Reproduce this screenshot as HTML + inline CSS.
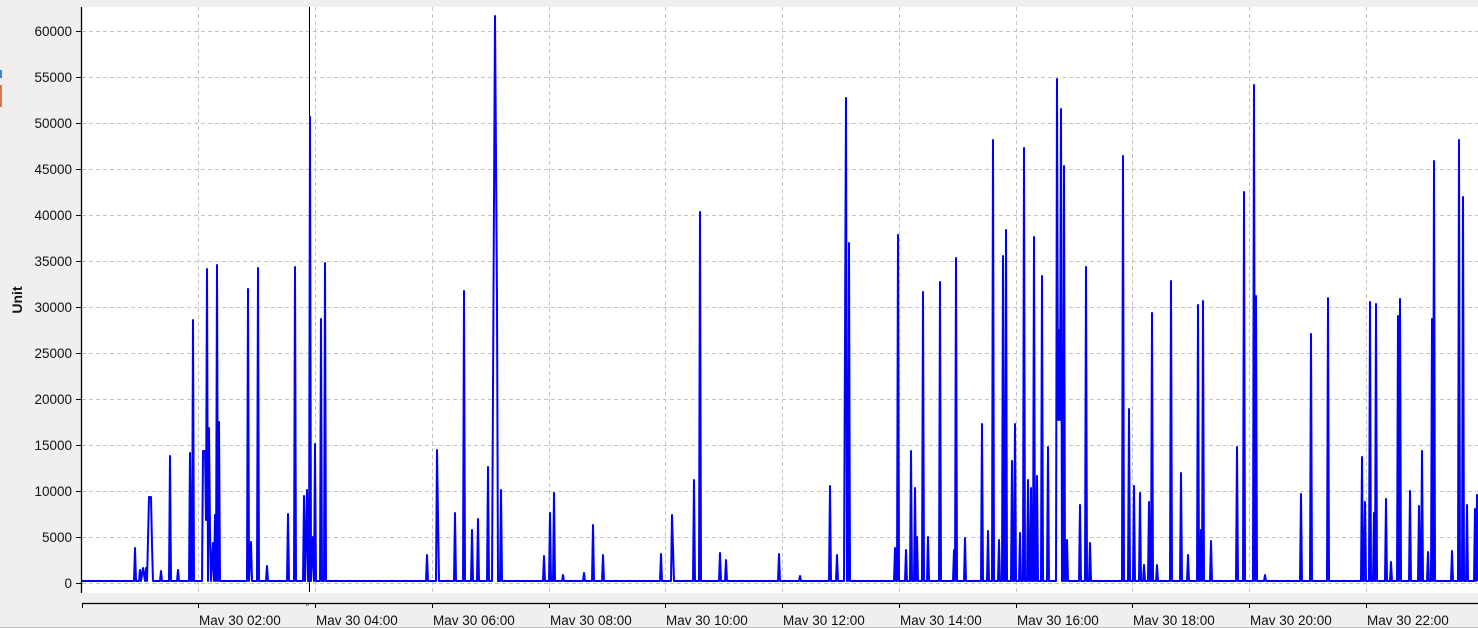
<!DOCTYPE html>
<html><head><style>
html,body{margin:0;padding:0;background:#f0efed;width:1478px;height:628px;overflow:hidden;font-family:"Liberation Sans",sans-serif}
</style></head><body>
<svg width="1478" height="628" xmlns="http://www.w3.org/2000/svg" style="position:absolute;left:0;top:0">
<rect x="0" y="0" width="1478" height="628" fill="#f0efed"/>
<rect x="0" y="70" width="2" height="8" fill="#3a86d0"/>
<rect x="0" y="85" width="2" height="22" fill="#e0744a"/>
<rect x="81" y="7" width="1397" height="586" fill="#fff"/>
<g stroke="#c4c4c4" stroke-dasharray="4,3" stroke-width="1">
<line x1="82" x2="1478" y1="583.5" y2="583.5"/><line x1="82" x2="1478" y1="537.5" y2="537.5"/><line x1="82" x2="1478" y1="491.5" y2="491.5"/><line x1="82" x2="1478" y1="445.5" y2="445.5"/><line x1="82" x2="1478" y1="399.5" y2="399.5"/><line x1="82" x2="1478" y1="353.5" y2="353.5"/><line x1="82" x2="1478" y1="307.5" y2="307.5"/><line x1="82" x2="1478" y1="261.5" y2="261.5"/><line x1="82" x2="1478" y1="215.5" y2="215.5"/><line x1="82" x2="1478" y1="169.5" y2="169.5"/><line x1="82" x2="1478" y1="123.5" y2="123.5"/><line x1="82" x2="1478" y1="77.5" y2="77.5"/><line x1="82" x2="1478" y1="31.5" y2="31.5"/>
<line x1="198.5" x2="198.5" y1="7" y2="593"/><line x1="315.5" x2="315.5" y1="7" y2="593"/><line x1="432.5" x2="432.5" y1="7" y2="593"/><line x1="549.5" x2="549.5" y1="7" y2="593"/><line x1="665.5" x2="665.5" y1="7" y2="593"/><line x1="782.5" x2="782.5" y1="7" y2="593"/><line x1="899.5" x2="899.5" y1="7" y2="593"/><line x1="1016.5" x2="1016.5" y1="7" y2="593"/><line x1="1132.5" x2="1132.5" y1="7" y2="593"/><line x1="1249.5" x2="1249.5" y1="7" y2="593"/><line x1="1366.5" x2="1366.5" y1="7" y2="593"/>
</g>
<line x1="309.5" x2="309.5" y1="7" y2="592" stroke="#000" stroke-width="1"/>
<polyline fill="none" stroke="#0000ff" stroke-width="2" stroke-linejoin="round" points="82,581 134,581 135,548 136,581 139,581 140,570 141,581 143,568 145,581 146,568 147,581 148,540 149,497 151,497 152,545 153,581 160,581 161,571 162,581 169,581 170,456 171,581 177,581 178,570 179,581 189,581 190,453 191,581 192,581 193,320 194,581 202,581 203,451 205,451 206,520 207,269 208,581 209,428 210,530 211,581 213,543 214,581 215,515 216,581 217,265 218,581 219,422 220,581 247,581 248,289 249,581 251,542 252,581 257,581 258,268 259,581 266,581 267,566 268,581 287,581 288,514 289,581 294,581 295,267 296,581 303,581 304,496 305,581 307,490 308,581 309,581 310,117 311,581 313,537 314,581 315,444 316,581 320,581 321,319 322,581 324,581 325,263 326,581 426,581 427,555 428,581 436,581 437,450 439,581 454,581 455,513 456,581 463,581 464,291 465,581 471,581 472,530 473,581 477,581 478,519 479,581 487,581 488,467 489,581 492,581 494,200 495,16 497,300 498,581 500,581 501,490 502,581 543,581 544,556 545,581 549,581 550,513 551,581 553,581 554,493 555,581 562,581 563,575 564,581 583,581 584,573 585,581 592,581 593,525 594,581 602,581 603,555 604,581 660,581 661,554 662,581 671,581 672,515 674,581 693,581 694,480 695,581 699,581 700,212 701,581 719,581 720,553 721,581 725,581 726,560 727,581 778,581 779,554 780,581 799,581 800,576 801,581 829,581 830,486 831,581 836,581 837,555 838,581 844,581 846,98 847,581 848,581 849,243 850,581 894,581 895,548 896,581 897,581 898,235 899,581 905,581 906,550 907,581 910,581 911,451 912,581 914,581 915,488 916,581 917,537 918,581 922,581 923,292 924,581 927,581 928,537 929,581 939,581 940,282 941,581 953,581 954,550 955,581 956,258 957,581 964,581 965,538 966,581 981,581 982,424 983,581 987,581 988,531 989,581 992,581 993,140 994,581 998,581 999,540 1000,581 1002,581 1003,256 1004,581 1005,581 1006,230 1007,581 1011,581 1012,461 1013,581 1014,581 1015,424 1016,581 1019,581 1020,533 1021,581 1023,581 1024,148 1025,581 1027,581 1028,480 1029,581 1030,581 1031,488 1032,581 1033,581 1034,237 1035,581 1036,581 1037,476 1038,581 1041,581 1042,276 1043,581 1047,581 1048,447 1049,581 1056,581 1057,79 1058,420 1059,330 1060,420 1061,109 1062,581 1063,581 1064,166 1065,581 1066,581 1067,540 1068,581 1079,581 1080,505 1081,581 1085,581 1086,267 1087,581 1089,581 1090,543 1091,581 1122,581 1123,156 1124,581 1128,581 1129,409 1130,581 1133,581 1134,486 1135,581 1139,581 1140,493 1141,581 1143,581 1144,565 1145,581 1148,581 1149,502 1150,581 1151,581 1152,313 1153,581 1156,581 1157,565 1158,581 1170,581 1171,281 1172,581 1180,581 1181,473 1182,581 1187,581 1188,555 1189,581 1197,581 1198,305 1199,581 1200,581 1201,530 1202,581 1203,301 1204,581 1210,581 1211,541 1212,581 1236,581 1237,447 1238,581 1243,581 1244,192 1245,581 1253,581 1254,85 1255,581 1256,296 1257,581 1264,581 1265,575 1266,581 1300,581 1301,494 1302,581 1310,581 1311,334 1312,581 1327,581 1328,298 1329,581 1361,581 1362,457 1363,581 1364,581 1365,502 1366,581 1369,581 1370,302 1371,581 1373,581 1374,513 1375,581 1376,304 1377,581 1385,581 1386,499 1387,581 1390,581 1391,562 1392,581 1397,581 1398,316 1399,581 1400,299 1401,581 1409,581 1410,491 1411,581 1418,581 1419,506 1420,581 1421,581 1422,451 1423,581 1427,581 1428,552 1429,581 1431,581 1432,319 1433,581 1434,161 1435,581 1451,581 1452,551 1453,581 1458,581 1459,140 1460,581 1462,581 1463,197 1464,581 1466,581 1467,505 1468,581 1474,581 1475,509 1476,581 1477,495 1478,581"/>
<line x1="81.5" x2="81.5" y1="7" y2="593" stroke="#000" stroke-width="1.3"/>
<g stroke="#000" stroke-width="1">
<line x1="76" x2="81" y1="583.5" y2="583.5"/><line x1="76" x2="81" y1="537.5" y2="537.5"/><line x1="76" x2="81" y1="491.5" y2="491.5"/><line x1="76" x2="81" y1="445.5" y2="445.5"/><line x1="76" x2="81" y1="399.5" y2="399.5"/><line x1="76" x2="81" y1="353.5" y2="353.5"/><line x1="76" x2="81" y1="307.5" y2="307.5"/><line x1="76" x2="81" y1="261.5" y2="261.5"/><line x1="76" x2="81" y1="215.5" y2="215.5"/><line x1="76" x2="81" y1="169.5" y2="169.5"/><line x1="76" x2="81" y1="123.5" y2="123.5"/><line x1="76" x2="81" y1="77.5" y2="77.5"/><line x1="76" x2="81" y1="31.5" y2="31.5"/>
<line x1="82" x2="1478" y1="603.5" y2="603.5" stroke-width="1.3"/>
<line x1="82.5" x2="82.5" y1="603" y2="608"/><line x1="198.5" x2="198.5" y1="603" y2="608"/><line x1="315.5" x2="315.5" y1="603" y2="608"/><line x1="432.5" x2="432.5" y1="603" y2="608"/><line x1="549.5" x2="549.5" y1="603" y2="608"/><line x1="665.5" x2="665.5" y1="603" y2="608"/><line x1="782.5" x2="782.5" y1="603" y2="608"/><line x1="899.5" x2="899.5" y1="603" y2="608"/><line x1="1016.5" x2="1016.5" y1="603" y2="608"/><line x1="1132.5" x2="1132.5" y1="603" y2="608"/><line x1="1249.5" x2="1249.5" y1="603" y2="608"/><line x1="1366.5" x2="1366.5" y1="603" y2="608"/>
</g>
<line x1="0" x2="1478" y1="627.5" y2="627.5" stroke="#bbb"/>
<g font-family="Liberation Sans, sans-serif" font-size="13.5" fill="#111" text-anchor="end">
<text x="72" y="588">0</text><text x="72" y="542">5000</text><text x="72" y="496">10000</text><text x="72" y="450">15000</text><text x="72" y="404">20000</text><text x="72" y="358">25000</text><text x="72" y="312">30000</text><text x="72" y="266">35000</text><text x="72" y="220">40000</text><text x="72" y="174">45000</text><text x="72" y="128">50000</text><text x="72" y="82">55000</text><text x="72" y="36">60000</text>
</g>
<text x="22" y="300" font-family="Liberation Sans, sans-serif" font-size="14" font-weight="bold" fill="#111" text-anchor="middle" transform="rotate(-90 22 300)">Unit</text>
<g font-family="Liberation Sans, sans-serif" font-size="13.5" fill="#111">
<text x="199" y="625">Mav 30 02:00</text><text x="316" y="625">Mav 30 04:00</text><text x="433" y="625">Mav 30 06:00</text><text x="550" y="625">Mav 30 08:00</text><text x="666" y="625">Mav 30 10:00</text><text x="783" y="625">Mav 30 12:00</text><text x="900" y="625">Mav 30 14:00</text><text x="1017" y="625">Mav 30 16:00</text><text x="1133" y="625">Mav 30 18:00</text><text x="1250" y="625">Mav 30 20:00</text><text x="1367" y="625">Mav 30 22:00</text>
</g>
<text x="306" y="610" font-size="8" fill="#111" font-family="Liberation Sans, sans-serif">"</text>
</svg>
</body></html>
